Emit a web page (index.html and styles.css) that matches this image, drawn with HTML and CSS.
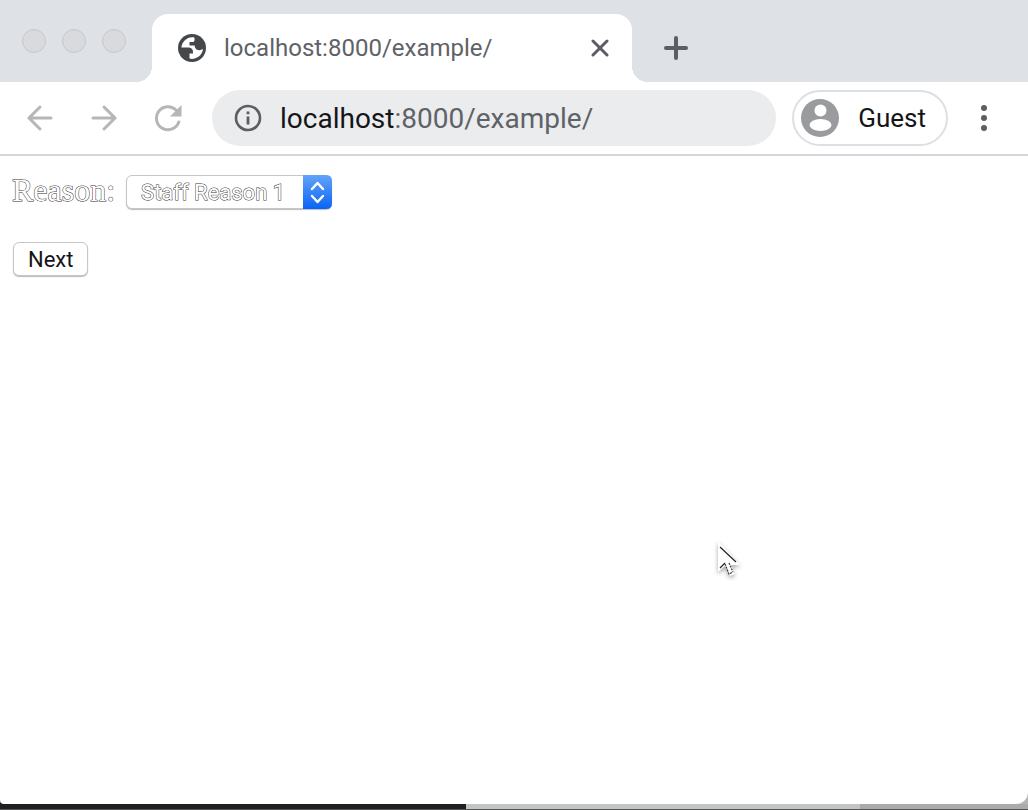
FILE: index.html
```html
<!DOCTYPE html>
<html lang="en">
<head>
<meta charset="utf-8">
<title>localhost:8000/example/</title>
<link rel="stylesheet" href="styles.css">
</head>
<body>
<div class="window">
  <header class="tab-strip">
    <div class="lights"><span class="light"></span><span class="light"></span><span class="light"></span></div>
    <div class="tab">
      <svg class="globe" viewBox="0 0 28 28" aria-hidden="true"><circle cx="14" cy="14" r="14" fill="#45484b"/><path d="M16 3.3A11 11 0 0 0 3.4 13.5H11Q15 14 15 18V19.500H11.500V24.600A11 11 0 0 0 25 15Q22 17 18.500 15.500Q17 14.500 16.500 11.500H11.500V8H15.500Q17.500 6 16 3.3Z" fill="#fff"/></svg>
      <span class="tab-title">localhost:8000/example/</span>
      <button class="icon-button close" aria-label="Close tab"><svg width="18" height="18" viewBox="0 0 18 18"><path d="M2 2 16 16M16 2 2 16" class="dark-line"/></svg></button>
    </div>
    <button class="icon-button" aria-label="New tab"><svg width="24" height="24" viewBox="0 0 24 24"><path d="M12 2V22M2 12H22" class="plus-line"/></svg></button>
  </header>
  <nav class="toolbar">
    <button class="icon-button nav-button" aria-label="Back"><svg width="28" height="28" viewBox="0 0 28 28"><path d="M25 14H3M14 3 3 14 14 25" class="light-line"/></svg></button>
    <button class="icon-button nav-button" aria-label="Forward"><svg width="28" height="28" viewBox="0 0 28 28"><path d="M3 14H25M14 3 25 14 14 25" class="light-line"/></svg></button>
    <button class="icon-button nav-button" aria-label="Reload"><svg width="28" height="28" viewBox="0 0 28 28"><path d="M24.800 18A11.500 11.500 0 1 1 22 6" class="light-line"/><path d="M27.500 1V12.500H16Z" fill="#b4b6b8"/></svg></button>
    <div class="address">
      <svg width="28" height="28" viewBox="0 0 28 28" aria-hidden="true"><circle cx="14" cy="14" r="12" fill="none" stroke="#5b5e62" stroke-width="2.6"/><path d="M14 7.500V10.300M14 12.500V20.500" stroke="#5b5e62" stroke-width="2.8"/></svg>
      <span class="url"><span class="host">localhost</span>:8000/example/</span>
    </div>
    <button class="profile"><svg width="38" height="38" viewBox="0 0 38 38" aria-hidden="true"><circle cx="19" cy="19" r="19" fill="#999b9e"/><circle cx="19.500" cy="11.500" r="6" fill="#fff"/><ellipse cx="19.500" cy="26" rx="11" ry="6" fill="#fff"/></svg><span>Guest</span></button>
    <button class="icon-button menu" aria-label="Menu"><svg width="8" height="28" viewBox="0 0 8 28"><circle cx="4" cy="4" r="3" fill="#5b5e62"/><circle cx="4" cy="14" r="3" fill="#5b5e62"/><circle cx="4" cy="24" r="3" fill="#5b5e62"/></svg></button>
  </nav>
  <main class="page">
    <div class="field">
      <label class="field-label" for="reason">Reason:</label>
      <div class="select-box">
        <select class="select" id="reason"><option>Staff Reason 1</option></select>
        <svg class="stepper" viewBox="0 0 29 34" aria-hidden="true"><defs><linearGradient id="blue" x2="0" y2="1"><stop offset="0" stop-color="#63a4fa"/><stop offset="1" stop-color="#0a64f5"/></linearGradient></defs><path d="M0 0H23Q29 0 29 6V28Q29 34 23 34H0Z" fill="url(#blue)"/><path d="M9 14 14.500 8 20 14M9 21 14.500 27 20 21" fill="none" stroke="#fff" stroke-width="2.4" stroke-linecap="round" stroke-linejoin="round"/></svg>
      </div>
    </div>
    <button class="next">Next</button>
  </main>
  <svg class="pointer" width="32" height="44" viewBox="0 0 32 44" aria-hidden="true"><path d="M6 3V34L13 28 18 38 23 36 19 27H28Z" fill="#fff"/><path d="M8 9 24 24M8 30 13 25" fill="none" stroke="#222" stroke-width="1.2"/><path d="M17 25 21 34M13 26 17 36L21 34" fill="none" stroke="#333" stroke-width="1.2" stroke-dasharray="2 1"/></svg>
</div>
<footer class="desktop-edge"><span class="edge-dark"></span><span class="edge-light"></span><span class="edge-gray"></span></footer>
</body>
</html>
```
FILE: styles.css
```css
* { box-sizing: border-box; }
body {
  margin: 0;
  min-height: 100vh;
  display: flex;
  flex-direction: column;
  background: linear-gradient(90deg, #1d1f20 50%, #b5b6b6 50%);
  font-family: Roboto, "Liberation Sans", sans-serif;
}
button { font-family: inherit; cursor: pointer; }
svg { display: block; flex-shrink: 0; }
.window {
  position: relative;
  flex: 1;
  display: flex;
  flex-direction: column;
  background: #fff;
  border-radius: 0 0 12px 4px;
}
.tab-strip {
  display: flex;
  align-items: center;
  height: 82px;
  padding-top: 14px;
  background: #dee1e6;
}
.lights {
  display: flex;
  gap: 16px;
  width: 152px;
  padding-left: 22px;
  margin-top: -14px;
}
.light {
  width: 24px;
  height: 24px;
  border: 1px solid #c6c7ca;
  border-radius: 50%;
  background: #d9dadd;
}
.tab {
  position: relative;
  display: flex;
  align-items: center;
  width: 480px;
  height: 68px;
  padding: 0 22px 0 26px;
  border-radius: 16px 16px 0 0;
  background: #fff;
}
.tab::before,
.tab::after {
  content: "";
  position: absolute;
  bottom: 0;
  width: 16px;
  height: 16px;
}
.tab::before { right: 100%; background: radial-gradient(circle at 0 0, transparent 16px, #fff 16px); }
.tab::after { left: 100%; background: radial-gradient(circle at 100% 0, transparent 16px, #fff 16px); }
.globe { width: 28px; height: 28px; }
.tab-title {
  flex: 1;
  margin-left: 18px;
  font-size: 24px;
  color: #5f6266;
}
.icon-button {
  display: flex;
  align-items: center;
  justify-content: center;
  padding: 0;
  border: 0;
  background: none;
}
.close { width: 20px; height: 20px; }
.tab + .icon-button { margin-left: 32px; }
.dark-line, .plus-line, .light-line { fill: none; stroke: #5b5e62; stroke-width: 3; stroke-linecap: round; }
.plus-line { stroke-width: 4; }
.light-line { stroke: #b4b6b8; }
.toolbar {
  display: flex;
  align-items: center;
  height: 74px;
  padding: 0 40px 0 8px;
  border-bottom: 2px solid #d5d6d8;
}
.nav-button { width: 64px; height: 56px; }
.address {
  flex: 1;
  display: flex;
  align-items: center;
  gap: 18px;
  height: 56px;
  margin-left: 12px;
  padding-left: 22px;
  border-radius: 28px;
  background: #ebecee;
}
.url { font-size: 28px; color: #5f6266; }
.host { color: #141517; }
.profile {
  display: flex;
  align-items: center;
  gap: 19px;
  height: 56px;
  margin-left: 16px;
  padding: 0 20px 0 7px;
  border: 2px solid #dcdfe4;
  border-radius: 28px;
  background: #fff;
  font-size: 26px;
  color: #141517;
}
.menu { width: 8px; margin-left: 32px; }
.page {
  display: flex;
  flex-direction: column;
  align-items: flex-start;
  gap: 33px;
  padding: 19px 12px;
}
.field { display: flex; align-items: flex-start; gap: 11px; }
.field-label {
  font-family: "Liberation Serif", serif;
  font-size: 32px;
  line-height: 30px;
  color: #fff;
  -webkit-text-stroke: 1px #333;
  paint-order: stroke fill;
}
.select-box { position: relative; }
.select {
  appearance: none;
  display: block;
  width: 206px;
  height: 34px;
  padding: 0 32px 0 14px;
  border: 1px solid #c6c6c8;
  border-radius: 6px;
  background: #fff;
  box-shadow: 0 1px 1px #bbb;
  font-family: inherit;
  font-size: 22px;
  color: #fff;
  -webkit-text-stroke: 1px #333;
  paint-order: stroke fill;
}
.stepper { position: absolute; top: 0; right: 0; width: 29px; height: 34px; pointer-events: none; }
.next {
  height: 34px;
  margin-left: 1px;
  padding: 0 14px;
  border: 1px solid #c6c6c8;
  border-radius: 6px;
  background: #fff;
  box-shadow: 0 1px 1px #bbb;
  font-size: 22px;
  color: #141517;
}
.pointer { position: absolute; left: 712px; top: 538px; filter: drop-shadow(0 2px 2px rgba(0, 0, 0, 0.35)); }
.desktop-edge { display: flex; height: 6px; border-bottom: 1px solid #555; }
.edge-dark { width: 466px; background: #1d1f20; }
.edge-light { flex: 1; background: #c3c5c5; }
.edge-gray { width: 168px; background: #a9aaa9; }
```
